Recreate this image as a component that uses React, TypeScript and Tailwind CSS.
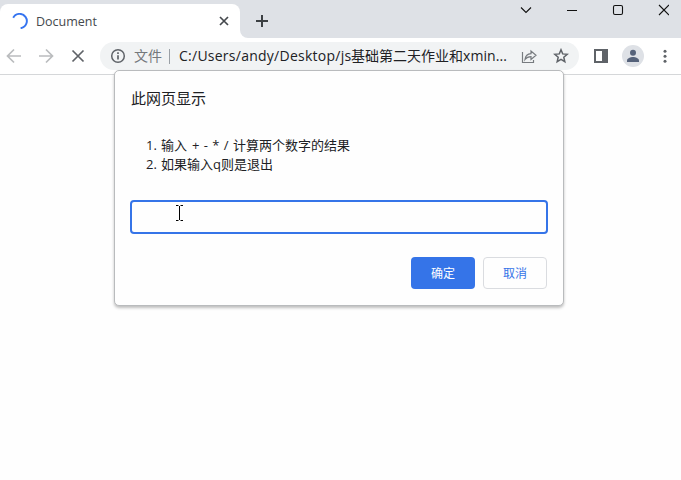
import React from 'react';

const latin = "font-['Open_Sans','Noto_Sans_CJK_SC',sans-serif]";

function TabStrip() {
  return (
    <div className="flex h-[38px] bg-[#dee1e6] pt-1">
      <div className="flex h-[34px] w-[240px] items-center rounded-t-lg bg-white pr-[10px] pl-3">
        <svg className="size-4" viewBox="0 0 16 16" fill="none" stroke="#3574f0" strokeWidth="1.9">
          <path d="M1.2 4.800A7.200 7.200 0 1 1 8.600 15.200" />
        </svg>
        <span className="mt-px ml-2 flex-1 text-[12.5px] leading-4 text-[#45494d]">Document</span>
        <svg className="size-3" viewBox="0 0 12 12" stroke="#45494d" strokeWidth="1.7">
          <path d="M2 2l8 8M10 2l-8 8" />
        </svg>
      </div>
      <div className="flex h-[34px] w-2 items-end bg-white">
        <div className="h-full w-full rounded-bl-lg bg-[#dee1e6]" />
      </div>
      <svg className="mt-[11px] ml-2 size-3" viewBox="0 0 12 12" stroke="#3c4043" strokeWidth="2">
        <path d="M6 0v12M0 6h12" />
      </svg>
      <div className="flex-1" />
      <svg className="h-3 w-[150px]" viewBox="0 0 150 12" fill="none" stroke="#111" strokeWidth="1.1">
        <path d="M2 3.5l5 5 5-5M48 6.5h10" />
        <rect x="94.5" y="1.5" width="9" height="9" rx="1.5" />
        <path d="M140 1l10 10M150 1l-10 10" />
      </svg>
      <div className="w-3" />
    </div>
  );
}

function Toolbar() {
  return (
    <div className="flex h-[37px] items-center border-b border-[#d5d7d9] bg-white">
      <svg className="h-4 w-[100px]" viewBox="0 0 100 16" fill="none" stroke="#babcbe" strokeWidth="1.7">
        <path d="M21 8H8M14 1.5L7.5 8l6.5 6.5M39 8h13M46 1.5L52.500 8 46 14.500" />
        <path d="M72.500 2.500l11 11M83.500 2.500l-11 11" stroke="#5f6368" />
      </svg>
      <div className="flex h-7 w-[479px] items-center rounded-full bg-[#f1f3f4] pr-[10px] pl-[10px] text-sm">
        <svg className="size-4" viewBox="0 0 16 16" fill="none" stroke="#5f6368" strokeWidth="1.5">
          <circle cx="8" cy="8" r="6.300" />
          <path d="M8 7.200v4.300M8 4.300v1.700" strokeWidth="1.700" />
        </svg>
        <span className="ml-2 w-7 text-[#74787c]">文件</span>
        <div className="ml-[7px] h-[15px] w-px bg-[#9aa0a6]" />
        <div className="ml-[9px] flex w-[330px] whitespace-nowrap text-[#202124]">
          <span className="w-[172px] tracking-[0.25px]">C:/Users/andy/Desktop/js</span>
          <span className="w-[112px]">基础第二天作业和</span>
          <span className="tracking-[0.1px]">xmin...</span>
        </div>
        <svg className="ml-[12px] size-4" viewBox="0 0 16 16" fill="none" stroke="#777b7f" strokeWidth="1.200">
          <path d="M1.500 4v10.500h11V12M4 11.500C4.500 7.500 6.500 6 10 5.700V3l5 4.300-5 4.200V8.700C7 8.700 5.500 9.500 4 11.500z" />
        </svg>
        <svg className="ml-[16px] size-4" viewBox="0 0 16 16" fill="none" stroke="#5f6368" strokeWidth="1.500">
          <path d="M8 1.800l1.700 4.100 4.500.4-3.400 2.900 1 4.400L8 11.300l-3.800 2.300 1-4.400-3.400-2.900 4.500-.4z" />
        </svg>
      </div>
      <svg className="ml-[15px] size-[14px]" viewBox="0 0 14 14">
        <path fillRule="evenodd" fill="#5f6368" d="M0 0h14v14H0zM2 2v10h6V2z" />
      </svg>
      <svg className="ml-[14px] size-[22px]" viewBox="0 0 22 22">
        <circle cx="11" cy="11" r="11" fill="#dee1e6" />
        <circle cx="11" cy="7.800" r="3" fill="#55627a" />
        <path d="M5 17v-1.500c0-2.200 3.500-3.500 6-3.500s6 1.300 6 3.500V17z" fill="#55627a" />
      </svg>
      <svg className="ml-[19px] h-4 w-1" viewBox="0 0 4 16" fill="#5f6368">
        <circle cx="2" cy="3.200" r="1.500" />
        <circle cx="2" cy="8.200" r="1.500" />
        <circle cx="2" cy="13.200" r="1.500" />
      </svg>
    </div>
  );
}

function PromptDialog() {
  return (
    <div className="absolute top-[70px] left-[114px] h-[236px] w-[450px] rounded-[5px] border border-[#b9bbbd] bg-[#fefefe] px-[15px] text-[#202124] shadow-[0_2px_3px_rgba(0,0,0,0.25)]">
      <h1 className="mt-4 pl-px text-[15px] leading-[22px]">此网页显示</h1>
      <ol className="mt-[27px] ml-4 text-[13px] leading-[19px]">
        <li className="flex whitespace-pre"><span className="w-[15px]">1.</span><span className="w-[27px]">输入</span><span className="w-[45px] tracking-[0.5px]"> + - * / </span><span>计算两个数字的结果</span></li>
        <li className="flex"><span className="w-[15px]">2.</span><span>如果输入q则是退出</span></li>
      </ol>
      <div className="mt-[26px] h-[34px] w-[418px] rounded-[4px] border-2 border-[#3574e8]">
        <svg className="mt-[3px] ml-[43px] h-4 w-[9px]" viewBox="0 0 9 16" fill="none" stroke="#000">
          <path d="M1 .5h2.500M5.500 .5H8M4.500 1v14M1 15.500h2.500M5.500 15.500H8" />
        </svg>
      </div>
      <div className="mt-[23px] flex justify-end gap-2 pr-px text-xs">
        <button className="h-8 w-16 rounded-[4px] bg-[#3574e8] pt-0.5 text-white">确定</button>
        <button className="h-8 w-16 rounded-[4px] border border-[#dadce0] pt-0.5 text-[#3574e8]">取消</button>
      </div>
    </div>
  );
}

export default function App() {
  return (
    <div className={`relative h-[480px] w-[681px] overflow-hidden bg-[#fefefe] ${latin}`}>
      <TabStrip />
      <Toolbar />
      <PromptDialog />
    </div>
  );
}
